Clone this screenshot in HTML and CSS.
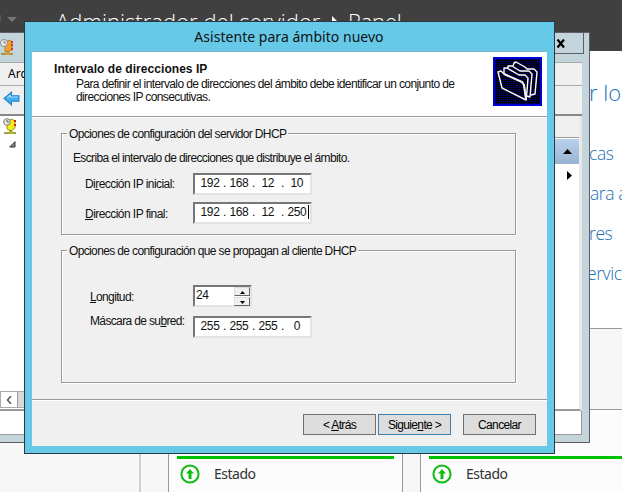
FILE: index.html
```html
<!DOCTYPE html>
<html lang="es">
<head>
<meta charset="utf-8">
<title>Asistente para ámbito nuevo</title>
<link rel="stylesheet" href="styles.css">
</head>
<body>
<main class="desktop">
  <header class="server-bar">
    <svg class="server-arrow" width="20" height="14" viewBox="0 0 20 14"><path d="M0 1v7" stroke="#777"/><path d="M7 3h10l-5 5z" fill="#777"/></svg>
    <span class="server-title">Administrador del servidor</span><svg class="server-sep" width="7" height="12" viewBox="0 0 7 12"><path d="M0 1l5 5-5 5z" fill="#fff"/></svg><span class="server-panel">Panel</span>
  </header>
  <nav class="links">
    <b>r lo</b><span>cas</span><span class="in">ara a</span><span>res</span><span class="out">ervic</span>
  </nav>
  <section class="dashboard"><div class="divider"></div></section>
  <section class="tile tile-a">
    <div class="bar"></div>
    <div class="status"><svg width="20" height="20" viewBox="0 0 20 20"><circle cx="10" cy="10" r="8.6" fill="none" stroke="#0ebc0e" stroke-width="2"/><path d="M10 5l4 4.5h-2.5V15h-3V9.500H6z" fill="#0ebc0e"/></svg><span>Estado</span></div>
  </section>
  <section class="tile tile-b">
    <div class="bar"></div>
    <div class="status"><svg width="20" height="20" viewBox="0 0 20 20"><circle cx="10" cy="10" r="8.6" fill="none" stroke="#0ebc0e" stroke-width="2"/><path d="M10 5l4 4.5h-2.5V15h-3V9.500H6z" fill="#0ebc0e"/></svg><span>Estado</span></div>
  </section>

  <section class="console">
    <div class="console-title">
      <svg width="15" height="18" viewBox="0 0 15 18"><path d="M5 3l5-2 2 2v8l-5 2H5z" fill="#f0a22c" stroke="#a66b13" stroke-width=".7"/><path d="M12 2v2m0 1v2m0 2v2" stroke="#d33" stroke-width="2"/><path d="M7.500 12v3M1 15h12" stroke="#a57b22" stroke-width="1.500"/><path d="M6 13h4v3H6z" fill="#d6a22d"/><circle cx="4" cy="4" r="3.500" fill="#eee" stroke="#888"/><path d="M4 2v2h2" fill="none" stroke="#777"/></svg>
      <div class="close"><svg width="10" height="9" viewBox="0 0 10 9"><path d="M1.500 .5l6.500 8M8 .5l-6.500 8" stroke="#000" stroke-width="2.200"/></svg></div>
    </div>
    <div class="console-menu">Archivo</div>
    <div class="console-tools"><svg width="17" height="15" viewBox="0 0 16 14"><path d="M1 7l7-6v3.500h7v5H8V13z" fill="#43aef0" stroke="#2582c4"/><path d="M4 6l3-2v1.500h7" fill="none" stroke="#9de0ff"/></svg></div>
    <div class="console-body">
      <div class="tree">
        <svg width="14" height="18" viewBox="0 0 14 18"><path d="M4 3l5-2 3 2v7l-4 3-4-2z" fill="#f4ee11" stroke="#85810f" stroke-width=".8"/><path d="M12 2v2m0 2v2" stroke="#c22" stroke-width="2"/><path d="M7.500 12v3M1 15h12" stroke="#83811a" stroke-width="1.500"/><path d="M6 13h4v3H6z" fill="#b9b42b"/><circle cx="4" cy="4" r="3.300" fill="#eee" stroke="#777"/><path d="M4 2v2h2" fill="none" stroke="#555"/></svg>
        <svg class="node" width="7" height="7" viewBox="0 0 7 7"><path d="M6 .7V6H.7z" fill="#888" stroke="#333"/></svg>
        <div class="hscroll"><i><svg width="6" height="8" viewBox="0 0 6 8"><path d="M5 0L1.500 4 5 8" fill="none" stroke="#555" stroke-width="1.500"/></svg></i></div>
      </div>
      <div class="actions">
        <div class="actions-head"></div>
        <div class="actions-group"><svg width="9" height="5" viewBox="0 0 9 5"><path d="M0 5l4.500-5L9 5z"/></svg></div>
        <svg class="more" width="5" height="9" viewBox="0 0 5 9"><path d="M0 0l5 4.500L0 9z"/></svg>
      </div>
    </div>
    <div class="console-status"></div>
  </section>

  <section class="wizard">
    <h1><span>Asistente para ámbito nuevo</span></h1>
    <div class="client">
      <div class="head">
        <div class="head-text">
          <h2>Intervalo de direcciones IP</h2>
          <p><span class="l1">Para definir el intervalo de direcciones del ámbito debe identificar un conjunto de</span><br><span class="l2">direcciones IP consecutivas.</span></p>
        </div>
        <svg class="folders" width="49" height="49" viewBox="0 0 49 49">
          <defs><pattern id="dots" width="2" height="2" patternUnits="userSpaceOnUse"><path d="M0 0h1v1H0z" fill="#0000a8"/></pattern></defs>
          <path d="M0 0h49v49H0z"/><path d="M0 0h49v49H0z" fill="url(#dots)"/><path d="M1 1h47v47H1z" fill="none" stroke="#0000d8" stroke-width="2"/>
          <g fill="none" stroke="#fff" stroke-width="1.400" stroke-linejoin="round"><path d="M5 15l3-1 3 3 18 8 2 3 2 15L9 31z"/><path d="M11 16v-5h3l12 7h6l3 3-1 13-1 9"/><path d="M15 12V9h4l8 5h9l3 3-2 23-3-1"/><path d="M20 9l1-3 2-1 9 5 2 2h7l3 3-2 22-4 1"/></g>
          <path d="M11 17l18 8 2 3 2 14" fill="none" stroke="#eee" stroke-width="2"/>
        </svg>
      </div>
      <div class="page">
        <div class="group g1">
          <div class="legend"><span>Opciones de configuración del servidor DHCP</span></div>
          <p class="hint">Escriba el intervalo de direcciones que distribuye el ámbito.</p>
          <div class="row"><label class="w-ini">Di<u>r</u>ección IP inicial:</label><div class="ip"><i>192</i>.<i>168</i>.<i>12</i>.<i>10</i></div></div>
          <div class="row"><label class="w-fin"><u>D</u>irección IP final:</label><div class="ip caret"><i>192</i>.<i>168</i>.<i>12</i>.<i>250</i></div></div>
        </div>
        <div class="group g2">
          <div class="legend"><span>Opciones de configuración que se propagan al cliente DHCP</span></div>
          <div class="row"><label><u>L</u>ongitud:</label><div class="spin"><span>24</span><div class="steps"><b><svg width="5" height="3" viewBox="0 0 5 3"><path d="M0 3l2.500-3L5 3z"/></svg></b><b><svg width="5" height="3" viewBox="0 0 5 3"><path d="M0 0h5L2.500 3z"/></svg></b></div></div></div>
          <div class="row"><label>Máscara de su<u>b</u>red:</label><div class="ip"><i>255</i>.<i>255</i>.<i>255</i>.<i>0</i></div></div>
        </div>
      </div>
      <footer>
        <button>&lt; <u>A</u>trás</button><button class="default">Siguie<u>n</u>te &gt;</button><button class="cancel">Cancelar</button>
      </footer>
    </div>
  </section>
</main>
</body>
</html>
```

FILE: styles.css
```css
* { box-sizing: border-box; }
body { margin: 0; font-family: "Liberation Sans", Arial, sans-serif; font-size: 12px; color: #000; }
svg { display: block; flex: none; }
i, b { font-style: normal; font-weight: normal; }
.desktop { position: relative; width: 622px; height: 492px; overflow: hidden; background: #fff; }

.server-bar { display: flex; height: 51px; background: #404040; color: #fff; font: 300 22px/28px "Open Sans", sans-serif; padding-top: 7px; white-space: nowrap; }
.server-arrow { margin: 7px 36px 0 0; }
.server-title { width: 265px; letter-spacing: .05px; }
.server-sep { margin: 8px 9px 0 11px; }
.server-panel { letter-spacing: -.2px; }

.links { position: absolute; left: 589px; top: 76px; width: 60px; display: flex; flex-direction: column; color: #1c70b4; font: 300 17.5px/40px "Open Sans", sans-serif; letter-spacing: -.4px; white-space: nowrap; }
.links b { font-size: 22px; font-weight: 300; line-height: 32px; margin-bottom: 25px; letter-spacing: 0; }
.links .in { padding-left: 1px; }
.links .out { margin-left: -2px; }

.dashboard { position: absolute; left: 0; top: 328px; width: 622px; height: 164px; background: #f7f7f7; border-top: 1px solid #999; }
.divider { width: 141px; height: 164px; border-right: 2px solid #d0d0d0; }
.tile { position: absolute; top: 409px; height: 90px; background: #fcfcfc; border: 1px solid #999; }
.tile-a { left: 168px; width: 235px; padding: 46px 8px 0; }
.tile-b { left: 420px; width: 235px; padding: 46px 8px 0; }
.bar { height: 3px; background: #00c300; }
.status { display: flex; align-items: center; gap: 14px; height: 29px; padding-left: 3px; color: #333; font: 14px "Noto Sans", sans-serif; letter-spacing: -.5px; }

.console { position: absolute; left: -10px; top: 32px; width: 600px; height: 411px; background: #c3d5da; border: 1px solid #5d5d69; padding: 0 7px 7px 0; display: flex; flex-direction: column; }
.console-title { display: flex; justify-content: space-between; height: 29px; padding-left: 9px; }
.console-title > svg { margin-top: 6px; }
.close { width: 40px; height: 21px; margin-right: -2px; border: 1px solid #5d5d69; border-top: 0; padding: 6px 0 0 11px; }
.console-menu { height: 24px; background: #f0f0f0; border-top: 1px solid #aaa; border-bottom: 1px solid #aaa; padding: 3px 0 0 17px; font: 12px/16px "Noto Sans", sans-serif; }
.console-tools { height: 30px; background: #f0f0f0; border-bottom: 2px solid #888; padding: 5px 0 0 12px; }
.console-body { flex: 1; display: flex; justify-content: space-between; background: #fff; border-right: 3px solid #e8e8e8; border-bottom: 2px solid #999; }
.tree { width: 200px; display: flex; flex-direction: column; padding: 2px 0 1px 12px; }
.tree .node { margin: 5px 0 0 6px; }
.hscroll { margin: auto 0 0 -3px; height: 17px; background: #d8d8d8; border: 1px solid #aaa; }
.hscroll i { display: block; width: 17px; height: 15px; background: #fff; border-right: 1px solid #999; padding: 4px 0 0 5px; }
.actions { width: 40px; }
.actions-head { height: 22px; background: #f0f0f0; border-bottom: 1px solid #999; }
.actions-group { height: 25px; margin-top: 1px; background: linear-gradient(#b9d1ea, #98b3d3); padding: 10px 0 0 24px; }
.more { margin: 7px 0 0 28px; }
.console-status { height: 24px; background: #fff; border: solid #999; border-width: 0 1px 1px 0; }

.wizard { position: absolute; left: 24px; top: 21px; width: 531px; height: 433px; background: #66c9e8; border: 1px solid #2b3a42; padding: 0 7px 7px; color: #111; }
.wizard h1 { margin: 0; height: 29px; text-align: center; font: 14px/30px "Noto Sans", sans-serif; letter-spacing: .03px; padding-right: 1px; white-space: nowrap; }
.client { height: 395px; background: #f0f0f0; display: flex; flex-direction: column; border-top: 1px solid #7fb3c9; }
.head { height: 65px; display: flex; justify-content: space-between; background: #fff; border-bottom: 1px solid #999; padding: 5px 5px 0 22px; white-space: nowrap; }
.head h2 { margin: 5px 0 0; font-size: 12px; line-height: 14px; letter-spacing: .05px; }
.head p { margin: 2px 0 0 22px; line-height: 13px; letter-spacing: -.61px; }
.page { height: 283px; border-top: 1px solid #fff; border-bottom: 1px solid #999; padding: 15px 31px 0 29px; }
.group { border: 1px solid #999; box-shadow: 1px 1px #fff, inset 1px 1px #fff; letter-spacing: -.64px; }
.g1 { height: 102px; }
.g2 { height: 133px; margin-top: 15px; }
.legend { height: 14px; margin-top: -7px; padding-left: 5px; line-height: 14px; white-space: nowrap; }
.legend span { background: #f0f0f0; padding: 0 2px; display: inline-block; }
.hint { margin: 10px 0 8px 11px; line-height: 14px; white-space: nowrap; }
.row { display: flex; height: 22px; margin-bottom: 7px; padding-left: 23px; }
.row label { width: 108px; line-height: 22px; white-space: nowrap; }
.w-ini, .w-fin { letter-spacing: -.55px; }
.w-fin { line-height: 24px !important; }
.ip, .spin { height: 22px; background: #fff; border: 2px solid; border-color: #777 #e3e3e3 #e3e3e3 #777; letter-spacing: -.4px; }
.ip { width: 119px; display: flex; line-height: 16px; padding-left: 2px; }
.ip i { width: 26px; text-align: center; }
.caret i:last-child { position: relative; }
.caret i:last-child::after { content: ""; position: absolute; right: 1px; top: 1px; width: 1px; height: 14px; background: #000; }
.g2 .row { padding-left: 28px; margin-bottom: 9px; }
.g2 .row label { width: 103px; line-height: 24px; letter-spacing: -.64px; }
.g2 .row + .row label { line-height: 10px; }
.g2 .legend { margin-bottom: 27px; }
.spin { width: 59px; display: flex; justify-content: space-between; line-height: 16px; padding-left: 1px; }
.steps { width: 16px; display: grid; gap: 1px; height: 19px; }
.steps b { background: #f0f0f0; border: 1px solid; border-color: #ddd #666 #666 #ddd; padding: 3px 0 0 5px; }
footer { flex: 1; border-top: 1px solid #fff; display: flex; justify-content: flex-end; padding: 13px 11px 0 0; }
button { width: 73px; height: 21px; padding: 0; background: #ddd; border: 1px solid #707070; font: 12px "Liberation Sans", sans-serif; letter-spacing: -.65px; color: #000; margin-left: 2px; }
.default { border-color: #3c7fb1; }
.cancel { margin-left: 12px; }
```
